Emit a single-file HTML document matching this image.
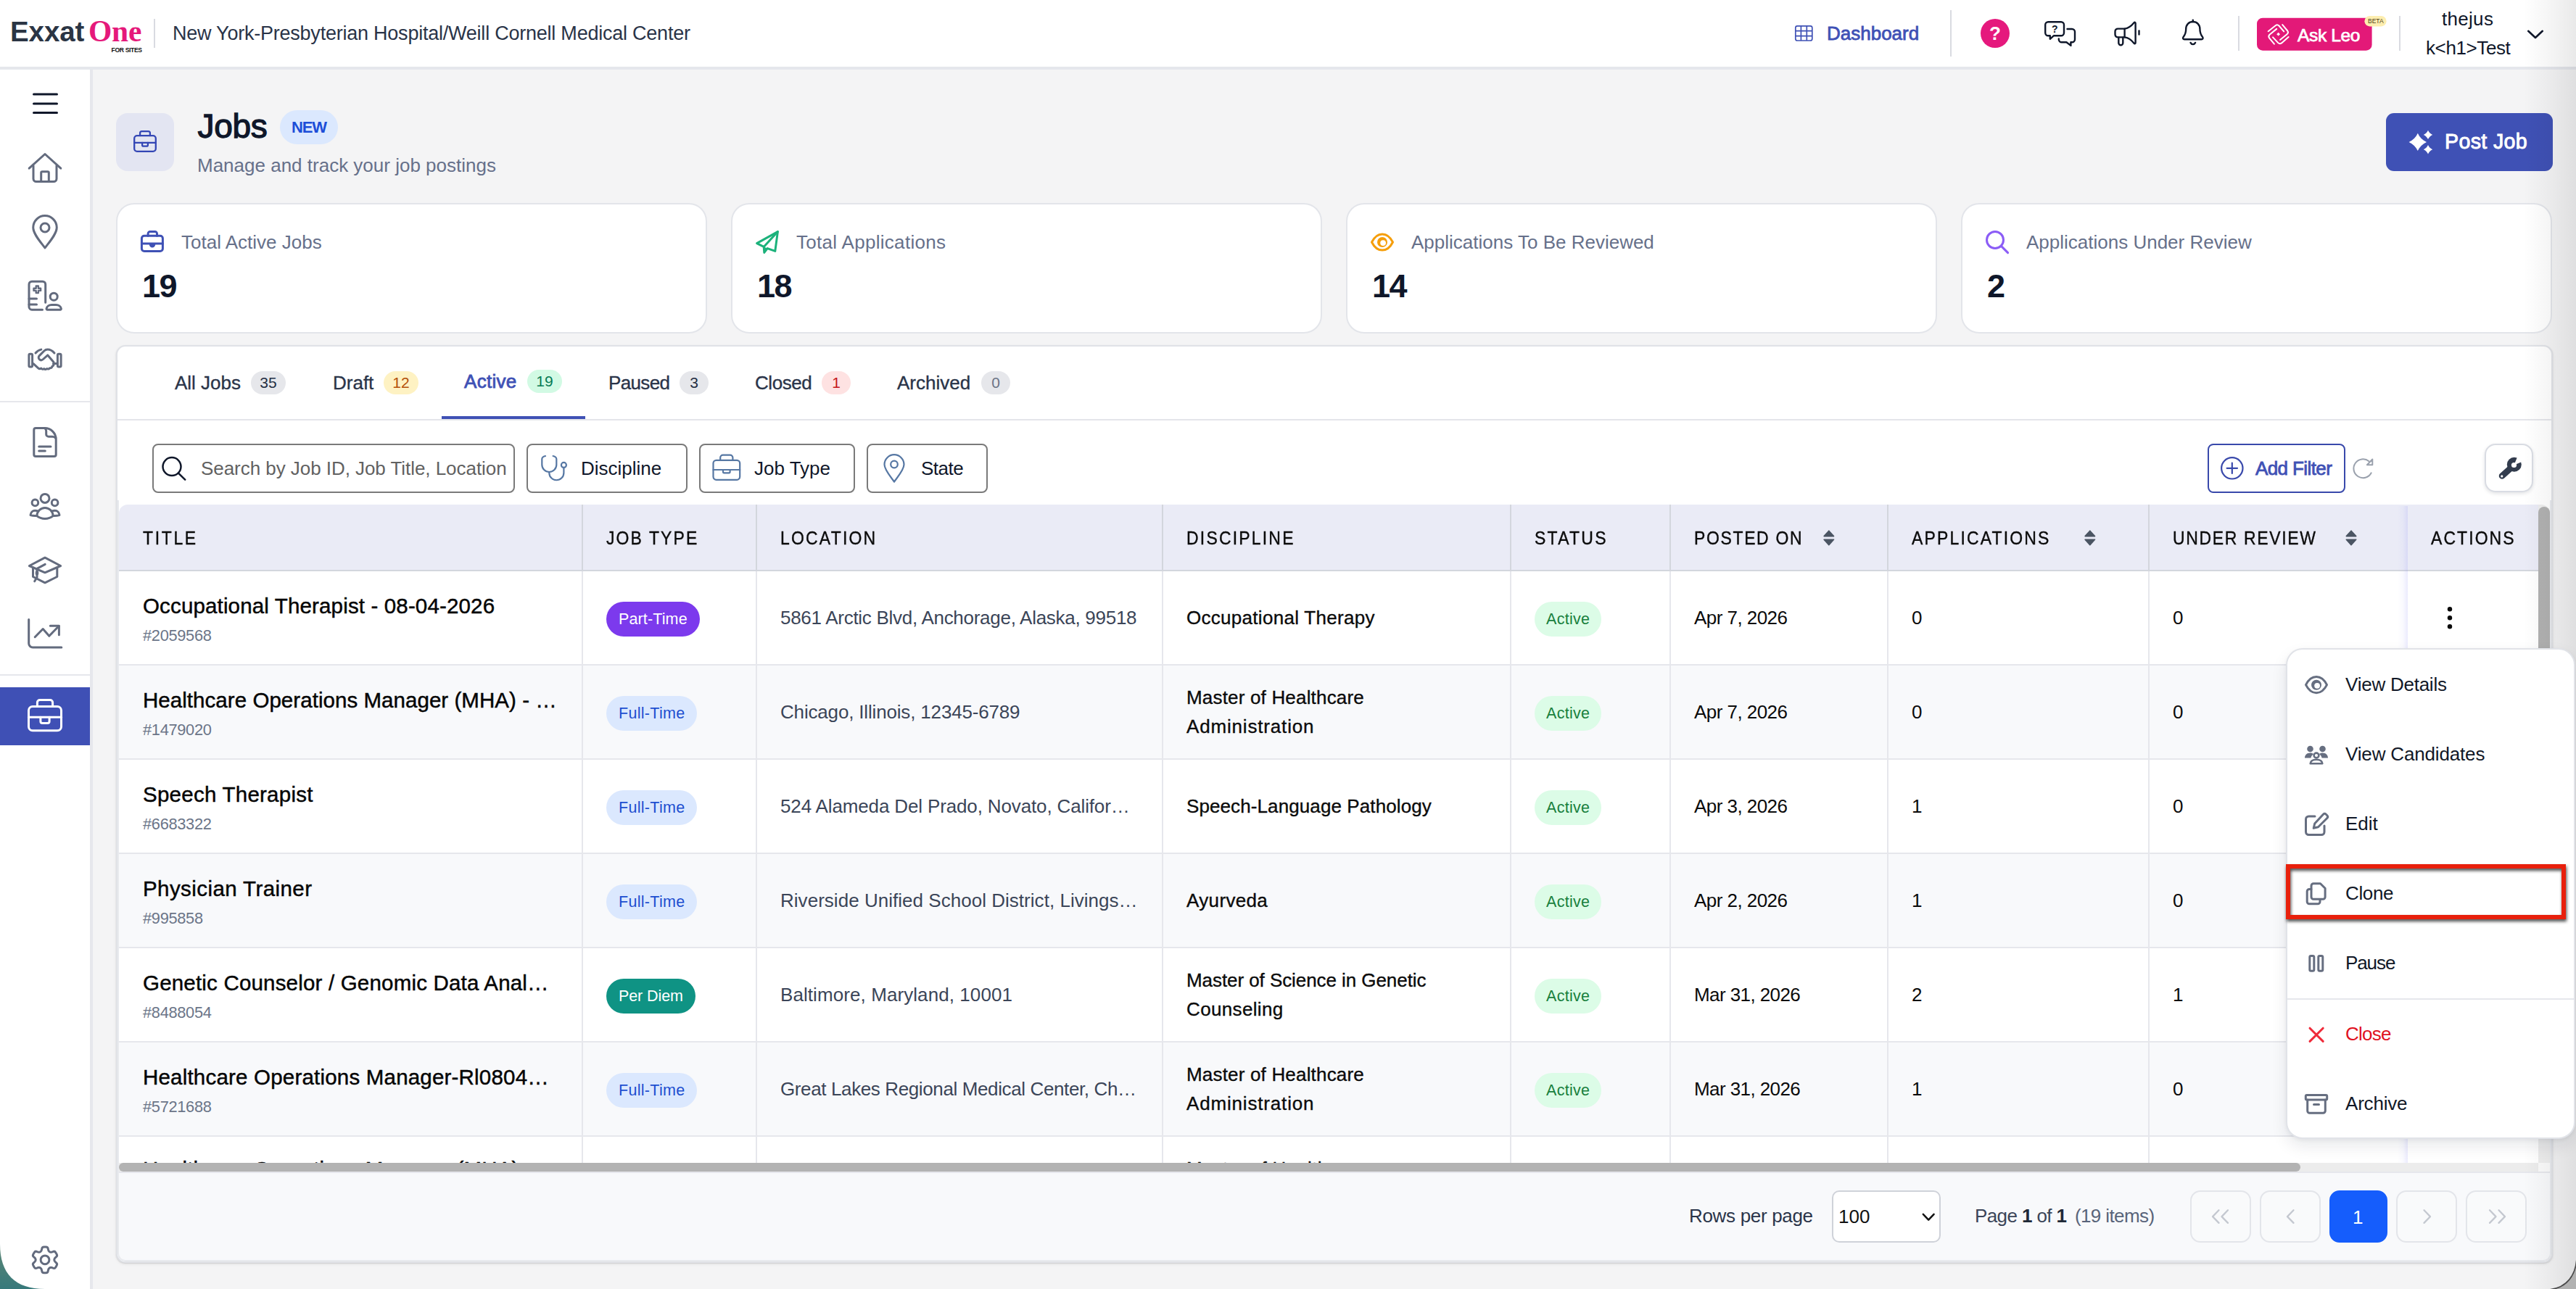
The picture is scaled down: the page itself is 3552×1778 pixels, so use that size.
<!DOCTYPE html>
<html lang="en">
<head>
<meta charset="utf-8">
<title>Jobs - Exxat One</title>
<style>
*{box-sizing:border-box;margin:0;padding:0}
html,body{width:3552px;height:1778px;overflow:hidden;background:#f4f4f5}
body{font-family:"Liberation Sans",sans-serif;color:#0f172a;position:relative;-webkit-font-smoothing:antialiased}
.abs{position:absolute}
svg{display:block;overflow:visible}
.ico{fill:none;stroke:#646c7e;stroke-width:2;stroke-linecap:round;stroke-linejoin:round}

/* ---------- header ---------- */
#hdr{position:absolute;left:0;top:0;width:3552px;height:96px;background:#fff;border-bottom:4px solid #e5e7ec}
#hdr .t{position:absolute;white-space:nowrap}
.vdiv{position:absolute;width:2px;background:#d9dbe1}

/* ---------- sidebar ---------- */
#side{position:absolute;left:0;top:96px;width:128px;height:1682px;background:#fff;border-right:4px solid #e6e7ec}
#side .sep{position:absolute;left:0;width:124px;height:2px;background:#e6e7ec}
#side .act{position:absolute;left:0;top:852px;width:124px;height:80px;background:#3f50b5}

/* ---------- page title ---------- */
.t{position:absolute;white-space:nowrap}

/* ---------- cards ---------- */
.card{position:absolute;top:280px;width:815px;height:180px;background:#fff;border:2px solid #e3e5ea;border-radius:25px}
.card .lbl{position:absolute;left:88px;top:34px;font-size:26px;line-height:36px;color:#66708a;white-space:nowrap}
.card .num{letter-spacing:-1.5px;position:absolute;left:34px;top:86.500px;font-size:45px;line-height:52px;font-weight:700;color:#0f172a;white-space:nowrap}
.card svg{position:absolute;left:30px;top:33px}

/* ---------- panel ---------- */
#panel{position:absolute;left:160px;top:476px;width:3360px;height:1266px;background:#fff;border:2px solid #e0e2e7;border-radius:13px;box-shadow:0 1px 2px rgba(0,0,0,.13),0 2px 5px rgba(0,0,0,.05);overflow:hidden}

#pc{position:absolute;left:-162px;top:-478px;width:3552px;height:1778px}
.tab{position:absolute;top:510px;font-size:26px;line-height:36px;color:#2a3449;white-space:nowrap;-webkit-text-stroke:.35px #2a3449}
.bdg{position:absolute;top:512px;height:32px;border-radius:16px;font-size:21px;line-height:32px;text-align:center;white-space:nowrap}
.fbtn{position:absolute;top:612px;height:68px;border:2px solid #7a7a7a;border-radius:8px;background:#fff}
.fbtn span{position:absolute;top:14px;font-size:26px;line-height:36px;color:#0f172a;white-space:nowrap}
#tblwrap{position:absolute;left:164px;top:696px;width:3352px;height:908px;overflow:hidden;border-radius:12px 12px 0 0;background:#fff}
table{border-collapse:separate;border-spacing:0;table-layout:fixed;width:3339px}
th{padding-top:2px !important;height:92px;background:#eaebf6;border-bottom:2px solid #d3d6dd;border-left:2px solid #d3d6dd;text-align:left;padding:0 0 0 32px;font-size:25.500px;font-weight:400;letter-spacing:.3px;color:#0b0b0b;-webkit-text-stroke:.4px #0b0b0b;white-space:nowrap;vertical-align:middle}

th span{display:inline-block;transform:scaleX(.9);transform-origin:0 50%}
th:first-child,td:first-child{border-left:none;padding-left:33px}
td{letter-spacing:-.55px;height:130px;border-bottom:2px solid #e6e7ec;border-left:2px solid #e6e7ec;padding:0 0 0 32px;vertical-align:middle;font-size:26px;line-height:40px;color:#0b0b0b;white-space:nowrap;overflow:hidden}
tr:nth-child(even) td{background:#f8f9fb}
tr:nth-child(7) .jt{top:-1px}
.jt{position:relative;top:2px;letter-spacing:.15px;font-size:29.500px;line-height:40px;color:#050505;-webkit-text-stroke:.45px #050505;margin-top:-2px}
.jid{position:relative;top:3.500px;letter-spacing:-.3px;font-size:21.800px;line-height:30px;color:#6b7588;margin-top:4px}
.loc{color:#3b4558;letter-spacing:-.28px}
.dis{-webkit-text-stroke:.35px #0b0b0b;white-space:normal;letter-spacing:.29px}
.pill{position:relative;top:2px;letter-spacing:.3px;display:inline-block;height:48px;line-height:48px;border-radius:24px;padding:0 17px;font-size:21.500px;white-space:nowrap;vertical-align:middle}
.pt{background:#7c3aed;color:#fff;letter-spacing:.13px}.ft{background:#dbe8fe;color:#1d4fd0}.pd{background:#0f9384;color:#fff;letter-spacing:-.1px}
.ac{background:#dcfce7;color:#18803d;padding:0 16px}
.srt{position:absolute;top:35px}
#foot{position:absolute;left:164px;top:1616px;width:3352px;height:124px;background:#f8f9fb;border-top:2px solid #e6e7ec}
.pbtn{position:absolute;top:1642px;width:84px;height:72px;border:2px solid #e3e5ea;border-radius:14px;background:#f9fafb}
/* menu */
#menu{position:absolute;left:3152px;top:894px;width:399px;height:677px;background:#fff;border:2px solid #e1e3e8;border-radius:23px;box-shadow:0 10px 22px rgba(15,23,42,.09),0 2px 5px rgba(15,23,42,.05)}
#menu .mi{position:absolute;left:80px;font-size:26px;line-height:36px;color:#111827;white-space:nowrap}
/*AUTOFIT*/
tbody tr:nth-child(2) .jt{letter-spacing:0.05px}
tbody tr:nth-child(3) .jt{letter-spacing:0.25px}
tbody tr:nth-child(4) .jt{letter-spacing:0.42px}
tbody tr:nth-child(5) .jt{letter-spacing:0.19px}
tbody tr:nth-child(6) .jt{letter-spacing:0.20px}
tbody tr:nth-child(2) .loc{letter-spacing:-0.17px}
tbody tr:nth-child(3) .loc{letter-spacing:-0.14px}
tbody tr:nth-child(4) .loc{letter-spacing:0.03px}
tbody tr:nth-child(5) .loc{letter-spacing:0.08px}
tbody tr:nth-child(6) .loc{letter-spacing:-0.38px}
tbody tr:nth-child(2) .dis{letter-spacing:0.18px}
tbody tr:nth-child(3) .dis{letter-spacing:0.10px}
tbody tr:nth-child(4) .dis{letter-spacing:0.35px}
tbody tr:nth-child(5) .dis{letter-spacing:-0.07px}
tbody tr:nth-child(6) .dis{letter-spacing:0.18px}
tbody tr:nth-child(5) td:nth-child(6){letter-spacing:-0.58px}
tbody tr:nth-child(6) td:nth-child(6){letter-spacing:-0.58px}
/*END*//*THFIT*/th:nth-child(1) span{letter-spacing:2.95px}th:nth-child(2) span{letter-spacing:2.33px}th:nth-child(3) span{letter-spacing:2.47px}th:nth-child(4) span{letter-spacing:2.46px}th:nth-child(5) span{letter-spacing:2.53px}th:nth-child(6) span{letter-spacing:1.85px}th:nth-child(7) span{letter-spacing:2.42px}th:nth-child(8) span{letter-spacing:1.86px}th:nth-child(9) span{letter-spacing:2.33px}/*ENDTH*/@media (max-width:1800px){html{zoom:.5}}
</style>
</head>
<body>

<!-- ================= HEADER ================= -->
<header id="hdr">
  <div class="t" id="lg1" style="left:14px;top:22px;font-size:38.500px;line-height:44px;font-weight:700;color:#2b3544;letter-spacing:-.1px">Exxat</div>
  <div class="t" id="lg2" style="left:122px;top:19px;font-size:41.500px;line-height:48px;font-family:'Liberation Serif',serif;font-weight:700;color:#e5197a;letter-spacing:-.2px">One</div>
  <div class="t" id="lg3" style="left:153.500px;top:63px;font-size:8.600px;line-height:12px;font-weight:700;color:#111;letter-spacing:-.35px">FOR SITES</div>
  <div class="vdiv" style="left:212px;top:26px;height:40px"></div>
  <div class="t" id="org" style="letter-spacing:-.23px;left:238px;top:28px;font-size:27px;line-height:36px;color:#2a3448">New York-Presbyterian Hospital/Weill Cornell Medical Center</div>

  <!-- right side of header -->
  <svg class="abs" style="left:0;top:0" width="3552" height="96" viewBox="0 0 3552 96">
    <!-- dashboard grid -->
    <g fill="none" stroke="#3f51b5" stroke-width="1.7">
      <rect x="2475.8" y="35.8" width="23" height="20.2" rx="2.5"/>
      <path d="M2483.4 35.8v20.2M2491.3 35.8v20.2M2475.8 42.7h23M2475.8 49.6h23"/>
    </g>
    <!-- help -->
    <circle cx="2751" cy="46" r="20" fill="#e5197d"/>
    <!-- chat -->
    <g fill="none" stroke="#0f172a" stroke-width="2.400" stroke-linejoin="round" stroke-linecap="round">
      <path d="M2824.2 30.2h17.8a4 4 0 0 1 4 4v11a4 4 0 0 1 -4 4h-10l-5.2 4.6v-4.6h-2.6a4 4 0 0 1 -4 -4v-11a4 4 0 0 1 4 -4z"/>
      <path d="M2850.5 40h6.5a4 4 0 0 1 4 4v10.3a4 4 0 0 1 -4 4h-1.6v4.6l-6 -4.6h-6.6a4 4 0 0 1 -4 -4v-.8"/>
    </g>
    <!-- megaphone -->
    <g fill="none" stroke="#0f172a" stroke-width="2.400" stroke-linejoin="round" stroke-linecap="round">
      <path d="M2929.6 39.6h-9.3a3.8 3.8 0 0 0 -3.8 3.8v4.2a3.8 3.8 0 0 0 3.8 3.8h9.3z"/>
      <path d="M2929.6 39.6c6 -.6 9.500 -4 13 -8.300c.8 -1 2 -.5 2 .8v26.800c0 1.300 -1.200 1.800 -2 .8c-3.500 -4.300 -7 -7.700 -13 -8.300"/>
      <path d="M2921.3 51.600v7.600a3 3 0 0 0 6 0v-7.600"/>
      <path d="M2949.5 42.500v5"/>
    </g>
    <!-- bell -->
    <g fill="none" stroke="#0f172a" stroke-width="2.400" stroke-linejoin="round" stroke-linecap="round">
      <path d="M3023.8 27.600v2.400"/>
      <path d="M3023.8 30c-5.800 0 -9.600 4.300 -9.600 10c0 6 -1.400 8.200 -3.600 11c-1.200 1.500 -.4 3.200 1.400 3.200h23.600c1.800 0 2.600 -1.700 1.400 -3.200c-2.200 -2.800 -3.600 -5 -3.600 -11c0 -5.700 -3.800 -10 -9.600 -10z"/>
      <path d="M3020.500 58.900c.8 1.500 2 2.200 3.300 2.200s2.500 -.7 3.300 -2.200"/>
    </g>
    <!-- ask leo -->
    <rect x="3112" y="24.700" width="158.600" height="45" rx="8" fill="#e31978"/>
    <g fill="none" stroke="#fff" stroke-width="2" stroke-linejoin="round" stroke-linecap="round">
      <path d="M3127.600 43.200L3138 35Q3140.200 33.400 3142.400 35.500L3149.200 43.400"/>
      <path d="M3147.200 34.100L3154.200 42.500Q3156 44.800 3153.800 46.900L3144 54.900"/>
      <path d="M3155.600 51L3146 59.400Q3143.500 61.200 3141.300 59.100L3134 51.400"/>
      <path d="M3135.900 60.700L3129.200 52.600Q3127.200 50 3129.500 47.800L3139.200 39.900"/>
    </g>
    <path d="M3141.600 44.800l2.400 2.400l-2.400 2.400l-2.400 -2.400z" fill="#fff"/>
    <rect x="3260.400" y="21.900" width="30.200" height="14.600" rx="7.300" fill="#fdeeb0"/>
    <!-- chevron -->
    <path d="M3486.200 42.800l9.800 9.200l9.800 -9.200" fill="none" stroke="#0f172a" stroke-width="2.600" stroke-linecap="round" stroke-linejoin="round"/>
  </svg>
  <div class="t" id="dash" style="letter-spacing:0px;font-weight:400;-webkit-text-stroke:0.8px #3f51b5;left:2519px;top:30px;font-size:26px;line-height:32px;color:#3f51b5">Dashboard</div>
  <div class="vdiv" style="left:2689px;top:14px;height:64px"></div>
  <div class="t" id="qm" style="left:2743px;top:31px;font-size:26px;line-height:30px;font-weight:700;color:#fff">?</div>
  <div class="t" id="cq" style="left:2829px;top:32px;font-size:14px;line-height:16px;font-weight:700;color:#0f172a">?</div>
  <div class="vdiv" style="left:3086px;top:22px;height:48px"></div>
  <div class="t" id="leo" style="letter-spacing:-0.35px;font-weight:400;-webkit-text-stroke:0.75px #fff;left:3168px;top:34px;font-size:24.500px;line-height:30px;color:#fff">Ask Leo</div>
  <div class="t" id="beta" style="left:3265px;top:24px;font-size:8.5px;line-height:10px;color:#4b3d16">BETA</div>
  <div class="vdiv" style="left:3308px;top:22px;height:48px"></div>
  <div class="t" id="un1" style="letter-spacing:.3px;left:3367px;top:8px;font-size:26px;line-height:36px;color:#0f172a">thejus</div>
  <div class="t" id="un2" style="letter-spacing:-.4px;left:3345px;top:48px;font-size:26px;line-height:36px;color:#0f172a">k&lt;h1&gt;Test</div>
</header>

<!-- ================= SIDEBAR ================= -->
<aside id="side">
  <div class="sep" style="top:457px"></div>
  <div class="sep" style="top:834px"></div>
  <div class="act"></div>
  <svg class="abs" style="left:0;top:-96px" width="128" height="1778" viewBox="0 0 128 1778">
    <!-- hamburger -->
    <path d="M46.500 130h32M46.500 143h32M46.500 155.500h32" fill="none" stroke="#0f172a" stroke-width="3" stroke-linecap="round"/>
    <g fill="none" stroke="#636b7e" stroke-width="3" stroke-linecap="round" stroke-linejoin="round">
      <!-- home -->
      <path d="M40.200 232.200L62 212.500L83.800 232.200"/>
      <path d="M46 228.500v18a4 4 0 0 0 4 4h24a4 4 0 0 0 4 -4v-18"/>
      <path d="M56.700 250.300v-12a1.500 1.500 0 0 1 1.500 -1.500h7.600a1.500 1.500 0 0 1 1.500 1.500v12"/>
      <!-- pin -->
      <path d="M62 342C57 335 45.750 323 45.750 313.800A16.250 16.250 0 0 1 78.250 313.800C78.250 323 67 335 62 342Z"/>
      <circle cx="62" cy="314" r="6"/>
      <!-- hospital user -->
      <path d="M58.500 427.200h-14.500a4 4 0 0 1 -4 -4v-31a4 4 0 0 1 4 -4h14.700a4 4 0 0 1 4 4v25"/>
      <path d="M40 412h10.500M40 420h10.500"/>
      <path d="M49.700 394.500h3.200v3.200h3.200v3.200h-3.200v3.200h-3.200v-3.200h-3.200v-3.200h3.200z" stroke-width="2.400"/>
      <circle cx="74.200" cy="409.200" r="5"/>
      <path d="M65.200 427.200h18a1.200 1.200 0 0 0 1.200 -1.300c-.6 -3.300 -3.600 -5.400 -7.200 -5.400h-6c-3.600 0 -6.600 2.100 -7.200 5.400a1.200 1.200 0 0 0 1.200 1.300z"/>
      <!-- handshake -->
      <rect x="39.900" y="488.200" width="4.700" height="17.800" rx="1.500"/>
      <rect x="79.400" y="488.200" width="4.700" height="17.800" rx="1.500"/>
      <path d="M49 487c2 -2.600 4.600 -4.200 7.800 -4.900"/>
      <path d="M75 487c-3 -3.600 -7 -5 -9.500 -5c-2 0 -3.400 .8 -4.600 2l-6.400 6.400c-1.700 1.700 -1.700 3.900 -.2 5.300c1.500 1.400 3.600 1.300 5.200 -.2l6.300 -5.600l8.200 9.500"/>
      <path d="M73.500 501.600h5.500"/>
      <path d="M46 501.600l6.500 6c1.300 1.200 2.900 1.500 4.300 .4c.9 1.500 2.700 1.700 4 .6c1.100 1.100 2.900 1.100 4 -.1c1.200 .9 3 .5 3.800 -.8c1.700 .4 3.200 -.8 3.400 -2.400c1.500 -.3 2.400 -1.900 1.800 -3.500"/>
      <!-- file -->
      <path d="M49.300 590.600h12.500c8.500 0 15.400 6.900 15.400 15.400v21.100a2.500 2.500 0 0 1 -2.500 2.500h-25.400a2.500 2.500 0 0 1 -2.500 -2.500v-34a2.500 2.500 0 0 1 2.500 -2.500z"/>
      <path d="M62 590.800c1 .9 1.700 2.300 1.700 3.800v4.300a3.400 3.400 0 0 0 3.400 3.400h5c1.900 0 3.500 .7 4.600 2"/>
      <path d="M53.700 616h16.300M53.700 622h8.600"/>
      <!-- users -->
      <circle cx="62" cy="687.400" r="6"/>
      <circle cx="48.400" cy="693.400" r="4.300"/>
      <circle cx="75.600" cy="693.400" r="4.300"/>
      <path d="M50.800 711.600c.6 -6.500 5.200 -11.200 11.200 -11.200s10.600 4.700 11.200 11.200c-3 2.500 -6.800 3.800 -11.200 3.800s-8.200 -1.300 -11.200 -3.800z"/>
      <path d="M52.500 705c-1.400 -.5 -2.700 -.8 -4.200 -.8c-3.400 0 -5.900 2.600 -6.300 6.300c2.600 .8 5.600 1.100 8.600 .9"/>
      <path d="M71.500 705c1.400 -.5 2.700 -.8 4.200 -.8c3.400 0 5.900 2.600 6.300 6.300c-2.600 .8 -5.600 1.100 -8.600 .9"/>
      <!-- grad cap -->
      <path d="M62 769.200l21.600 11.300l-21.600 9.300l-21.600 -9.300z"/>
      <path d="M45.500 783v12.500l16.500 8.300l16.800 -8.300v-12.500"/>
      <path d="M62.200 778.400l-11.200 5.900v12l-3.300 5.500"/>
      <!-- chart -->
      <path d="M39.700 854.500v33a5.500 5.500 0 0 0 5.500 5.500h39.600"/>
      <path d="M48.200 878.700l11 -11.200l8.600 9.800l13.400 -13.800"/>
      <path d="M69.300 863.300h12.100v12.400"/>
      <!-- gear -->
      <circle cx="62" cy="1737.800" r="5.900"/>
    </g>
    <ellipse cx="51" cy="790.400" rx="2.300" ry="3.300" fill="#636b7e"/>
    <!-- gear body -->
    <path fill="none" stroke="#636b7e" stroke-width="3" stroke-linejoin="round" d="M68.37 1726.77Q66.62 1725.76 66.29 1722.85L66.25 1722.52Q65.96 1719.93 63.36 1719.93L60.64 1719.93Q58.04 1719.93 57.75 1722.52L57.71 1722.85Q57.38 1725.76 55.63 1726.77L55.63 1726.77Q53.88 1727.77 51.19 1726.61L50.89 1726.47Q48.51 1725.44 47.21 1727.69L45.85 1730.05Q44.55 1732.30 46.64 1733.84L46.90 1734.04Q49.26 1735.78 49.26 1737.80L49.26 1737.80Q49.26 1739.82 46.90 1741.56L46.64 1741.76Q44.55 1743.30 45.85 1745.55L47.21 1747.91Q48.51 1750.16 50.89 1749.13L51.19 1748.99Q53.88 1747.83 55.63 1748.83L55.63 1748.83Q57.38 1749.84 57.71 1752.75L57.75 1753.08Q58.04 1755.67 60.64 1755.67L63.36 1755.67Q65.96 1755.67 66.25 1753.08L66.29 1752.75Q66.62 1749.84 68.37 1748.83L68.37 1748.83Q70.12 1747.83 72.81 1748.99L73.11 1749.13Q75.49 1750.16 76.79 1747.91L78.15 1745.55Q79.45 1743.30 77.36 1741.76L77.10 1741.56Q74.74 1739.82 74.74 1737.80L74.74 1737.80Q74.74 1735.78 77.10 1734.04L77.36 1733.84Q79.45 1732.30 78.15 1730.05L76.79 1727.69Q75.49 1725.44 73.11 1726.47L72.81 1726.61Q70.12 1727.77 68.37 1726.77Z"/>
  </svg>
  <svg class="abs" style="left:0;top:-96px" width="128" height="1778" viewBox="0 0 128 1778">
    <g fill="none" stroke="#fff" stroke-width="3" stroke-linecap="round" stroke-linejoin="round">
      <rect x="39.500" y="974.400" width="45" height="33.300" rx="5.500"/>
      <path d="M51.400 974.400v-5.400a3.500 3.500 0 0 1 3.500 -3.500h14.200a3.500 3.500 0 0 1 3.500 3.500v5.400"/>
      <path d="M39.500 989.300h45"/>
      <path d="M55.900 989.300v5.700a2.500 2.500 0 0 0 2.500 2.500h7.200a2.500 2.500 0 0 0 2.500 -2.500v-5.700"/>
    </g>
  </svg>
</aside>

<!-- ================= PAGE TITLE ================= -->
<div class="abs" style="left:160px;top:156px;width:80px;height:80px;border-radius:16px;background:#e3e5f2"></div>
<div class="t" id="ttl" style="letter-spacing:-0.3px;font-weight:400;-webkit-text-stroke:1.3px #0f172a;left:272.500px;top:146px;font-size:46px;line-height:56px;color:#0f172a">Jobs</div>
<div class="abs" style="left:386px;top:152px;width:80px;height:47px;border-radius:24px;background:#dbe8fe"></div>
<div class="t" id="newb" style="letter-spacing:-1.150px;left:402px;top:161.500px;font-size:22px;line-height:28px;font-weight:700;color:#1d4ed8">NEW</div>
<div class="t" id="sub" style="left:272px;top:210px;font-size:26px;line-height:36px;color:#66708a">Manage and track your job postings</div>

<div class="abs" style="left:3290px;top:156px;width:230px;height:80px;border-radius:11px;background:#3f51b5"></div>
<div class="t" id="pj" style="letter-spacing:0.35px;font-weight:400;-webkit-text-stroke:0.9px #fff;left:3371px;top:175px;font-size:28.600px;line-height:40px;color:#fff;">Post Job</div>

<!-- ================= STAT CARDS ================= -->
<section class="card" style="left:160px"><div class="lbl">Total Active Jobs</div><div class="num">19</div></section>
<section class="card" style="left:1008px"><div class="lbl" style="letter-spacing:.3px">Total Applications</div><div class="num">18</div></section>
<section class="card" style="left:1856px"><div class="lbl">Applications To Be Reviewed</div><div class="num">14</div></section>
<section class="card" style="left:2704px"><div class="lbl">Applications Under Review</div><div class="num">2</div></section>


<svg class="abs" style="left:0;top:0;pointer-events:none" width="3552" height="500" viewBox="0 0 3552 500">
  <!-- title briefcase -->
  <g fill="none" stroke="#3346b5" stroke-width="2.300" stroke-linecap="round" stroke-linejoin="round">
    <rect x="185.200" y="187.100" width="29.600" height="21.800" rx="3.800"/>
    <path d="M193.100 187.100v-3.500a2.500 2.500 0 0 1 2.500 -2.500h8.800a2.500 2.500 0 0 1 2.500 2.500v3.500"/>
    <path d="M185.200 196.800h29.600"/>
    <path d="M196.100 196.800v3.100a1.800 1.800 0 0 0 1.800 1.800h4.200a1.800 1.800 0 0 0 1.800 -1.800v-3.100"/>
  </g>
  <!-- post job sparkles -->
  <g fill="#fff">
    <path d="M3333.8 183.7C3336.3 189.3 3340.4 193.4 3346.0 195.9C3340.4 198.4 3336.3 202.5 3333.8 208.1C3331.3 202.5 3327.2 198.4 3321.6 195.9C3327.2 193.4 3331.3 189.3 3333.8 183.7Z"/>
    <path d="M3348.0 179.7C3349.3 182.5 3351.4 184.6 3354.2 185.9C3351.4 187.2 3349.3 189.3 3348.0 192.1C3346.7 189.3 3344.6 187.2 3341.8 185.9C3344.6 184.6 3346.7 182.5 3348.0 179.7Z"/>
    <path d="M3348.0 200.0C3349.3 202.8 3351.4 204.9 3354.2 206.2C3351.4 207.5 3349.3 209.6 3348.0 212.4C3346.7 209.6 3344.6 207.5 3341.8 206.2C3344.6 204.9 3346.7 202.8 3348.0 200.0Z"/>
  </g>
  <!-- card 1 briefcase -->
  <g fill="none" stroke="#3f51b5" stroke-width="3" stroke-linecap="round" stroke-linejoin="round">
    <rect x="195.400" y="325.300" width="29" height="21.200" rx="3.500"/>
    <path d="M204.100 325.300v-3a2.800 2.800 0 0 1 2.800 -2.800h6.800a2.800 2.800 0 0 1 2.800 2.800v3"/>
    <path d="M195.400 336h29"/>
  </g>
  <path d="M205.800 336h8.400v1.200a4.200 4.200 0 0 1 -8.400 0z" fill="#3f51b5"/>
  <!-- card 2 paper plane -->
  <g fill="none" stroke="#1cb27b" stroke-width="3" stroke-linecap="round" stroke-linejoin="round">
    <path d="M1072.400 319.600L1043.600 335.600L1053.200 340.400L1053.800 348.400L1058.200 342.600L1068.800 346.400Z"/>
    <path d="M1072.400 319.600L1053.200 340.400"/>
  </g>
  <path d="M1053.200 340.400L1058.200 342.600L1053.800 348.400Z" fill="#1cb27b"/>
  <!-- card 3 eye -->
  <g fill="none" stroke="#f59e0b" stroke-width="3" stroke-linecap="round" stroke-linejoin="round">
    <path d="M1891.500 334C1895 327 1900 322.900 1906 322.900S1917 327 1920.500 334C1917 341 1912 345.100 1906 345.100S1895 341 1891.500 334Z"/>
    
  </g>
  <circle cx="1906" cy="334" r="7" fill="#f59e0b"/><circle cx="1907.100" cy="335.100" r="3.900" fill="#fff"/>
  <!-- card 4 search -->
  <g fill="none" stroke="#8b5cf6" stroke-width="3" stroke-linecap="round">
    <circle cx="2751" cy="331" r="11.500"/>
    <path d="M2759.400 339.400L2768.600 348.600"/>
  </g>
</svg>

<!-- ================= MAIN PANEL ================= -->
<main id="panel">
<div id="pc">
  <!-- tabs -->
  <nav>
    <div class="tab" id="tb1" style="left:241px">All Jobs</div><div class="bdg" style="left:346px;width:48px;background:#e6e7eb;color:#253044">35</div>
    <div class="tab" id="tb2" style="left:459px">Draft</div><div class="bdg" style="left:529px;width:48px;background:#fef2c3;color:#b4500b">12</div>
    <div class="tab" id="tb3" style="letter-spacing:0.3px;font-weight:400;-webkit-text-stroke:0.8px #3f51b5;left:640px;top:508px;color:#3f51b5;">Active</div><div class="bdg" style="left:727px;top:510px;width:48px;background:#d2fae4;color:#067a55">19</div>
    <div class="tab" id="tb4" style="letter-spacing:-.65px;left:839px">Paused</div><div class="bdg" style="left:937px;width:40px;background:#e6e7eb;color:#253044">3</div>
    <div class="tab" id="tb5" style="letter-spacing:-.46px;left:1041px">Closed</div><div class="bdg" style="left:1133px;width:40px;background:#fee2e2;color:#c5161d">1</div>
    <div class="tab" id="tb6" style="left:1237px">Archived</div><div class="bdg" style="left:1353px;width:40px;background:#e6e7eb;color:#6b7385">0</div>
    <div class="abs" style="left:609px;top:574px;width:198px;height:4px;background:#3f51b5"></div>
    <div class="abs" style="left:162px;top:578px;width:3356px;height:2px;background:#e4e5ea"></div>
  </nav>

  <!-- filter row -->
  <div class="fbtn" style="left:210px;width:500px;overflow:hidden"><span id="ph" style="left:65px;color:#616161;letter-spacing:-.05px">Search by Job ID, Job Title, Location</span></div>
  <div class="fbtn" style="left:726px;width:222px"><span id="f1" style="left:73px">Discipline</span></div>
  <div class="fbtn" style="left:964px;width:215px"><span id="f2" style="left:74px">Job Type</span></div>
  <div class="fbtn" style="left:1195px;width:167px"><span id="f3" style="letter-spacing:-.48px;left:73px">State</span></div>
  <div class="fbtn" style="left:3044px;width:190px;border-color:#3949ab"><span id="f4" style="letter-spacing:-0.6px;font-weight:400;-webkit-text-stroke:0.8px #3f51b5;left:64px;color:#3f51b5;">Add Filter</span></div>
  <div class="abs" style="left:3426px;top:612px;width:67px;height:67px;border:2px solid #d9dce3;border-radius:15px;background:#fff;box-shadow:0 2px 5px rgba(15,23,42,.12)"></div>

  <!-- table -->
  <div id="tblwrap">
    <table>
      <colgroup><col style="width:638px"><col style="width:240px"><col style="width:560px"><col style="width:480px"><col style="width:220px"><col style="width:300px"><col style="width:360px"><col style="width:358px"><col style="width:183px"></colgroup>
      <thead><tr>
        <th><span>TITLE</span></th><th><span>JOB TYPE</span></th><th><span>LOCATION</span></th><th><span>DISCIPLINE</span></th><th><span>STATUS</span></th><th><span>POSTED ON</span></th><th><span>APPLICATIONS</span></th><th><span>UNDER REVIEW</span></th><th style="border-left:none;padding-left:32px"><span>ACTIONS</span></th>
      </tr></thead>
      <tbody>
        <tr><td><div class="jt">Occupational Therapist - 08-04-2026</div><div class="jid">#2059568</div></td><td><span class="pill pt">Part-Time</span></td><td class="loc">5861 Arctic Blvd, Anchorage, Alaska, 99518</td><td class="dis">Occupational Therapy</td><td><span class="pill ac">Active</span></td><td>Apr 7, 2026</td><td>0</td><td>0</td><td class="act" style="border-left:none"></td></tr>
        <tr><td><div class="jt">Healthcare Operations Manager (MHA) - …</div><div class="jid">#1479020</div></td><td><span class="pill ft">Full-Time</span></td><td class="loc">Chicago, Illinois, 12345-6789</td><td class="dis">Master of Healthcare<br><span style="letter-spacing:.83px">Administration</span></td><td><span class="pill ac">Active</span></td><td>Apr 7, 2026</td><td>0</td><td>0</td><td class="act" style="border-left:none"></td></tr>
        <tr><td><div class="jt">Speech Therapist</div><div class="jid">#6683322</div></td><td><span class="pill ft">Full-Time</span></td><td class="loc">524 Alameda Del Prado, Novato, Califor…</td><td class="dis">Speech-Language Pathology</td><td><span class="pill ac">Active</span></td><td>Apr 3, 2026</td><td>1</td><td>0</td><td class="act" style="border-left:none"></td></tr>
        <tr><td><div class="jt">Physician Trainer</div><div class="jid">#995858</div></td><td><span class="pill ft">Full-Time</span></td><td class="loc">Riverside Unified School District, Livings…</td><td class="dis">Ayurveda</td><td><span class="pill ac">Active</span></td><td>Apr 2, 2026</td><td>1</td><td>0</td><td class="act" style="border-left:none"></td></tr>
        <tr><td><div class="jt">Genetic Counselor / Genomic Data Anal…</div><div class="jid">#8488054</div></td><td><span class="pill pd">Per Diem</span></td><td class="loc">Baltimore, Maryland, 10001</td><td class="dis">Master of Science in Genetic<br><span style="letter-spacing:.35px">Counseling</span></td><td><span class="pill ac">Active</span></td><td>Mar 31, 2026</td><td>2</td><td>1</td><td class="act" style="border-left:none"></td></tr>
        <tr><td><div class="jt">Healthcare Operations Manager-Rl0804…</div><div class="jid">#5721688</div></td><td><span class="pill ft">Full-Time</span></td><td class="loc">Great Lakes Regional Medical Center, Ch…</td><td class="dis">Master of Healthcare<br><span style="letter-spacing:.83px">Administration</span></td><td><span class="pill ac">Active</span></td><td>Mar 31, 2026</td><td>1</td><td>0</td><td class="act" style="border-left:none"></td></tr>
        <tr><td><div class="jt">Healthcare Operations Manager (MHA)</div><div class="jid">#4410236</div></td><td><span class="pill ft">Full-Time</span></td><td class="loc">Chicago, Illinois, 12345-6789</td><td class="dis">Master of Healthcare<br><span style="letter-spacing:.83px">Administration</span></td><td><span class="pill ac">Active</span></td><td>Mar 31, 2026</td><td>0</td><td>0</td><td class="act" style="border-left:none"></td></tr>
      </tbody>
    </table>
  </div>
  <div class="abs" style="left:3306px;top:698px;width:14px;height:906px;background:linear-gradient(to right,rgba(110,110,245,0),rgba(110,110,245,.04) 55%,rgba(110,110,245,.14));pointer-events:none"></div>
  <!-- vertical scrollbar -->
  <div class="abs" style="left:3500px;top:696px;width:16px;height:908px;background:#ededed;border-radius:0 12px 0 0"></div>
  <div class="abs" style="left:3500px;top:699px;width:16px;height:340px;background:#b1b1b1;border-radius:8px"></div>
  <!-- horizontal scrollbar -->
  <div class="abs" style="left:164px;top:1604px;width:3352px;height:12px;background:#ececec"></div>
  <div class="abs" style="left:164px;top:1604px;width:3008px;height:12px;background:#b3b3b3;border-radius:6px"></div>
  <div class="abs" style="left:3500px;top:1604px;width:16px;height:12px;background:#fafafa"></div>

  <!-- footer -->
  <div id="foot"></div>
  <div class="abs" style="left:162px;top:690px;width:3356px;height:1050px;border:2px solid #e8eaee;border-top:none;border-radius:0 0 11px 11px;pointer-events:none"></div>


  <div class="t" id="rpp" style="letter-spacing:-.32px;left:2329px;top:1659px;font-size:26px;line-height:36px;color:#2a3449">Rows per page</div>
  <div class="abs" style="left:2526px;top:1642px;width:150px;height:72px;border:2px solid #cfd2d9;border-radius:10px;background:#fff"></div>
  <div class="t" id="sel" style="left:2535px;top:1660px;font-size:26px;line-height:36px;color:#111">100</div>
  <div class="t" id="pg" style="letter-spacing:-.61px;left:2723px;top:1659px;font-size:26px;line-height:36px;color:#3b4558">Page <b style="color:#1f2937">1</b> of <b style="color:#1f2937">1</b> <span style="color:#59647a;margin-left:5px">(19 items)</span></div>
  <div class="pbtn" style="left:3020px"></div>
  <div class="pbtn" style="left:3116px"></div>
  <div class="pbtn" style="left:3212px;width:80px;background:#155dfc;border-color:#155dfc"></div>
  <div class="pbtn" style="left:3304px"></div>
  <div class="pbtn" style="left:3400px"></div>
  <div class="t" id="p1" style="left:3244px;top:1661px;font-size:26px;line-height:36px;color:#fff">1</div>

  <svg class="abs" style="left:0;top:0;pointer-events:none" width="3552" height="1778" viewBox="0 0 3552 1778">
    <!-- search -->
    <g fill="none" stroke="#0f172a" stroke-width="2.500" stroke-linecap="round">
      <circle cx="237" cy="643.600" r="12.500"/><path d="M246 652.600L255.200 661.600"/>
    </g>
    <g fill="none" stroke="#5677a3" stroke-width="2.200" stroke-linecap="round" stroke-linejoin="round">
      <!-- stethoscope -->
      <path d="M752 629C749.500 629.500 747.300 630.500 747.300 633.200V641A10 10 0 0 0 767.300 641V633.200C767.300 630.500 765 629.500 762.600 629"/>
      <path d="M757.300 651V652.200A10.050 10.050 0 0 0 777.400 652.200V645"/>
      <circle cx="777.400" cy="641.400" r="3.500"/>
      <!-- briefcase -->
      <rect x="983.500" y="634.800" width="36.700" height="27" rx="4.200"/>
      <path d="M993.200 634.800v-3.600a3.600 3.600 0 0 1 3.600 -3.600h10a3.600 3.600 0 0 1 3.600 3.600v3.600"/>
      <path d="M983.500 648h36.700"/>
      <path d="M997 648v2.800a1.500 1.500 0 0 0 1.500 1.500h6.600a1.500 1.500 0 0 0 1.500 -1.500v-2.800"/>
      <!-- pin -->
      <path d="M1233 664.500C1228.500 658 1219.500 648 1219.500 640.700A13.500 13.500 0 0 1 1246.500 640.700C1246.500 648 1237.500 658 1233 664.500Z"/>
      <circle cx="1233" cy="640.500" r="4.800"/>
    </g>
    <!-- add filter plus -->
    <g fill="none" stroke="#3949ab" stroke-width="2.200" stroke-linecap="round">
      <circle cx="3077.800" cy="645.800" r="14.700"/><path d="M3070.600 645.800h14.400M3077.800 638.600v14.400"/>
    </g>
    <!-- refresh -->
    <g fill="none" stroke="#9aa1ad" stroke-width="2" stroke-linecap="round" stroke-linejoin="round">
      <path d="M3266.500 636.300A12.900 12.900 0 1 0 3269.700 652.300"/>
      <path d="M3271.300 633.500V641.300H3263.900Z"/>
    </g>
    <!-- wrench -->
    <g>
      <path d="M3450 656.500L3465 643" stroke="#323c4d" stroke-width="8.500" stroke-linecap="round" fill="none"/>
      <circle cx="3466.800" cy="640.800" r="10" fill="#323c4d"/>
      <path d="M3466.500 641.600L3472.500 627L3481 635.500Z" fill="#fff"/>
      <circle cx="3466.500" cy="641.500" r="3.600" fill="#fff"/>
      <circle cx="3449.800" cy="656.900" r="1.600" fill="#fff"/>
    </g>
    <!-- sort icons -->
    <g fill="#4b5563" stroke="#4b5563" stroke-width="1.600" stroke-linejoin="round">
      <path d="M2515.1 739.600L2521.8 732.200L2528.5 739.600Z M2515.1 744.200L2521.8 751.600L2528.5 744.200Z"/> <path d="M2875.1 739.600L2881.8 732.200L2888.5 739.600Z M2875.1 744.200L2881.8 751.600L2888.5 744.200Z"/> <path d="M3235.3 739.600L3242.0 732.200L3248.7 739.600Z M3235.3 744.200L3242.0 751.600L3248.7 744.200Z"/>
    </g>
    <!-- row dots -->
    <g fill="#0b0b0b"><circle cx="3378" cy="840.200" r="3.200"/><circle cx="3378" cy="852.200" r="3.200"/><circle cx="3378" cy="864.200" r="3.200"/></g>
    <!-- select chevron -->
    <path d="M2651.800 1674.800l7.400 7.800l7.400 -7.800" fill="none" stroke="#111" stroke-width="2.500" stroke-linecap="round" stroke-linejoin="round"/>
    <!-- pagination chevrons -->
    <g fill="none" stroke="#c4c8d0" stroke-width="2.300" stroke-linecap="round" stroke-linejoin="round">
      <path d="M3059.500 1669.300l-8.500 8.800l8.500 8.800M3072 1669.300l-8.500 8.800l8.500 8.800"/>
      <path d="M3162.500 1669.300l-8.500 8.800l8.500 8.800"/>
      <path d="M3342.500 1669.300l8.500 8.800l-8.500 8.800"/>
      <path d="M3433 1669.300l8.500 8.800l-8.500 8.800M3445.500 1669.300l8.500 8.800l-8.500 8.800"/>
    </g>
  </svg>
</div>
</main>


<!-- screenshot chrome: right-edge shading and rounded window corners -->
<div class="abs" style="left:3480px;top:0;width:72px;height:1778px;background:linear-gradient(to right,rgba(0,0,0,0) 0,rgba(0,0,0,.045) 55%,rgba(0,0,0,.085) 100%);pointer-events:none"></div>
<!-- ================= ROW ACTION MENU ================= -->
<div id="menu">
  <div class="mi" id="m1" style="letter-spacing:-.24px;top:30px">View Details</div>
  <div class="mi" id="m2" style="letter-spacing:-.16px;top:126px">View Candidates</div>
  <div class="mi" id="m3" style="top:222px">Edit</div>
  <div class="mi" id="m4" style="letter-spacing:-.37px;top:318px">Clone</div>
  <div class="mi" id="m5" style="letter-spacing:-1.09px;top:414px">Pause</div>
  <div class="abs" style="left:0;top:481px;width:395px;height:2px;background:#e6e7ec"></div>
  <div class="mi" id="m6" style="letter-spacing:-.76px;top:512px;color:#e0111f">Close</div>
  <div class="mi" id="m7" style="letter-spacing:-.19px;top:608px">Archive</div>
</div>

<svg class="abs" style="left:0;top:0;pointer-events:none" width="3552" height="1778" viewBox="0 0 3552 1778">
  <g fill="none" stroke="#666e80" stroke-width="3" stroke-linecap="round" stroke-linejoin="round">
    <!-- eye -->
    <path d="M3179.500 944.700C3183 937.700 3188 933.600 3194 933.600S3205 937.700 3208.500 944.700C3205 951.700 3200 955.800 3194 955.800S3183 951.700 3179.500 944.700Z"/>
    
    <!-- edit -->
    <path d="M3192 1126h-8.500a4 4 0 0 0 -4 4v17.500a4 4 0 0 0 4 4h17.500a4 4 0 0 0 4 -4v-8.500"/>
    <path d="M3203.500 1123.200a2.700 2.700 0 0 1 3.800 0l1.500 1.500a2.700 2.700 0 0 1 0 3.800l-12.300 12.300l-6.300 1.500l1.500 -6.300z"/>
    <!-- clone -->
    <path d="M3190 1218.700h9.500l6.600 6.600v12a3 3 0 0 1 -3 3h-13.100a3 3 0 0 1 -3 -3v-15.600a3 3 0 0 1 3 -3z"/>
    <path d="M3186.900 1226.500h-2.700a3 3 0 0 0 -3 3v14.300a3 3 0 0 0 3 3h11.800a3 3 0 0 0 3 -3v-2.500"/>
    <!-- pause -->
    <rect x="3184.800" y="1318.500" width="6" height="20.800" rx="1.800"/>
    <rect x="3196.800" y="1318.500" width="6" height="20.800" rx="1.800"/>
    <!-- archive -->
    <rect x="3179.300" y="1510.400" width="29.400" height="6.600" rx="1.500"/>
    <path d="M3181.700 1517v15.300a3 3 0 0 0 3 3h18.600a3 3 0 0 0 3 -3v-15.300"/>
    <path d="M3190.500 1523.500h7"/>
  </g>
  <circle cx="3194" cy="944.700" r="7" fill="#666e80"/><circle cx="3195.100" cy="945.800" r="3.900" fill="#fff"/>
  <!-- users (filled) -->
  <g fill="#666e80">
    <circle cx="3185.500" cy="1033" r="4.300"/><circle cx="3202.500" cy="1033" r="4.300"/>
    <path d="M3178 1045.500c0 -4.200 3 -7 7.500 -7c2 0 3.600 .6 4.800 1.600c-2 1.300 -3.300 3.200 -3.900 5.400z"/>
    <path d="M3210 1045.500c0 -4.200 -3 -7 -7.500 -7c-2 0 -3.600 .6 -4.800 1.600c2 1.300 3.300 3.200 3.900 5.400z"/>
  </g>
  <g fill="none" stroke="#666e80" stroke-width="2.600" stroke-linejoin="round">
    <circle cx="3194" cy="1042" r="3.400"/>
    <path d="M3185.700 1053.200c.4 -3.600 3.600 -5.400 8.300 -5.400s7.900 1.800 8.300 5.400z"/>
  </g>
  <!-- close x -->
  <path d="M3185 1418.200l18.200 18.200M3203.200 1418.200l-18.200 18.200" fill="none" stroke="#ef2b3a" stroke-width="3" stroke-linecap="round"/>
</svg>
<div class="abs" style="left:3152px;top:1192px;width:386px;height:76px;border:6px solid #e8200c;filter:drop-shadow(1.500px 3.500px 2px rgba(0,0,0,.7))"></div>

<svg class="abs" style="left:0;top:1698px;pointer-events:none" width="3552" height="80" viewBox="0 1698 3552 80">
  <defs><linearGradient id="dk" x1="0" y1="0" x2="0" y2="1"><stop offset="0" stop-color="#5d8775"/><stop offset="1" stop-color="#37797b"/></linearGradient></defs>
  <path d="M0 1716C0 1757 21 1778 62 1778H0Z" fill="url(#dk)"/>
  <path d="M3553 1735C3552 1758 3540 1777 3514 1779H3553Z" fill="#b1b1b1"/><path d="M3553 1735C3552 1758 3540 1777 3514 1779" fill="none" stroke="#4a4a4a" stroke-width="1.600"/>
</svg>

</body>
</html>
